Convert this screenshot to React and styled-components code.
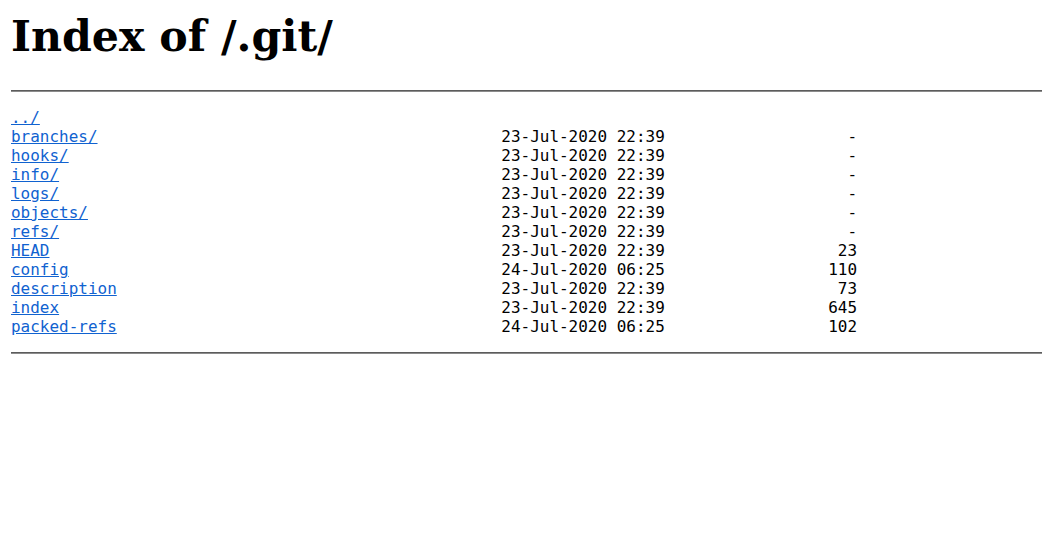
import React from "react";
import styled, { createGlobalStyle } from "styled-components";

const Global = createGlobalStyle`
  html, body { margin: 0; padding: 0; background: #fff; }
  body { padding: 0 0 0 11px; }
`;

const Title = styled.h1`
  margin: 0;
  padding-top: 12px;
  height: 90px;
  box-sizing: border-box;
  font-family: "DejaVu Serif", serif;
  font-weight: bold;
  font-size: 42.7px;
  line-height: 48px;
  color: #000;
`;

const Rule = styled.hr`
  margin: 0;
  height: 0;
  border: 0;
  border-top: 1px solid #5c5c5c;
  border-bottom: 1px solid #8c8c8c;
`;

const Listing = styled.div`
  padding: 16px 0 16px;
  font-family: "DejaVu Sans Mono", monospace;
  font-size: 15.97px;
  line-height: 19px;
  color: #000;
`;

const Row = styled.div`
  display: grid;
  grid-template-columns: 51ch 17ch 20ch;
  white-space: pre;
`;

const Name = styled.a`
  justify-self: start;
  color: #1062d0;
  text-decoration: underline;
`;

const DateCell = styled.span``;

const Size = styled.span`
  text-align: right;
`;

const entries = [
  { name: "../" },
  { name: "branches/", date: "23-Jul-2020 22:39", size: "-" },
  { name: "hooks/", date: "23-Jul-2020 22:39", size: "-" },
  { name: "info/", date: "23-Jul-2020 22:39", size: "-" },
  { name: "logs/", date: "23-Jul-2020 22:39", size: "-" },
  { name: "objects/", date: "23-Jul-2020 22:39", size: "-" },
  { name: "refs/", date: "23-Jul-2020 22:39", size: "-" },
  { name: "HEAD", date: "23-Jul-2020 22:39", size: "23" },
  { name: "config", date: "24-Jul-2020 06:25", size: "110" },
  { name: "description", date: "23-Jul-2020 22:39", size: "73" },
  { name: "index", date: "23-Jul-2020 22:39", size: "645" },
  { name: "packed-refs", date: "24-Jul-2020 06:25", size: "102" },
];

export default function App() {
  return (
    <>
      <Global />
      <Title>Index of /.git/</Title>
      <Rule />
      <Listing>
        {entries.map((e) => (
          <Row key={e.name}>
            <Name href={e.name}>{e.name}</Name>
            <DateCell>{e.date || ""}</DateCell>
            <Size>{e.size || ""}</Size>
          </Row>
        ))}
      </Listing>
      <Rule />
    </>
  );
}
